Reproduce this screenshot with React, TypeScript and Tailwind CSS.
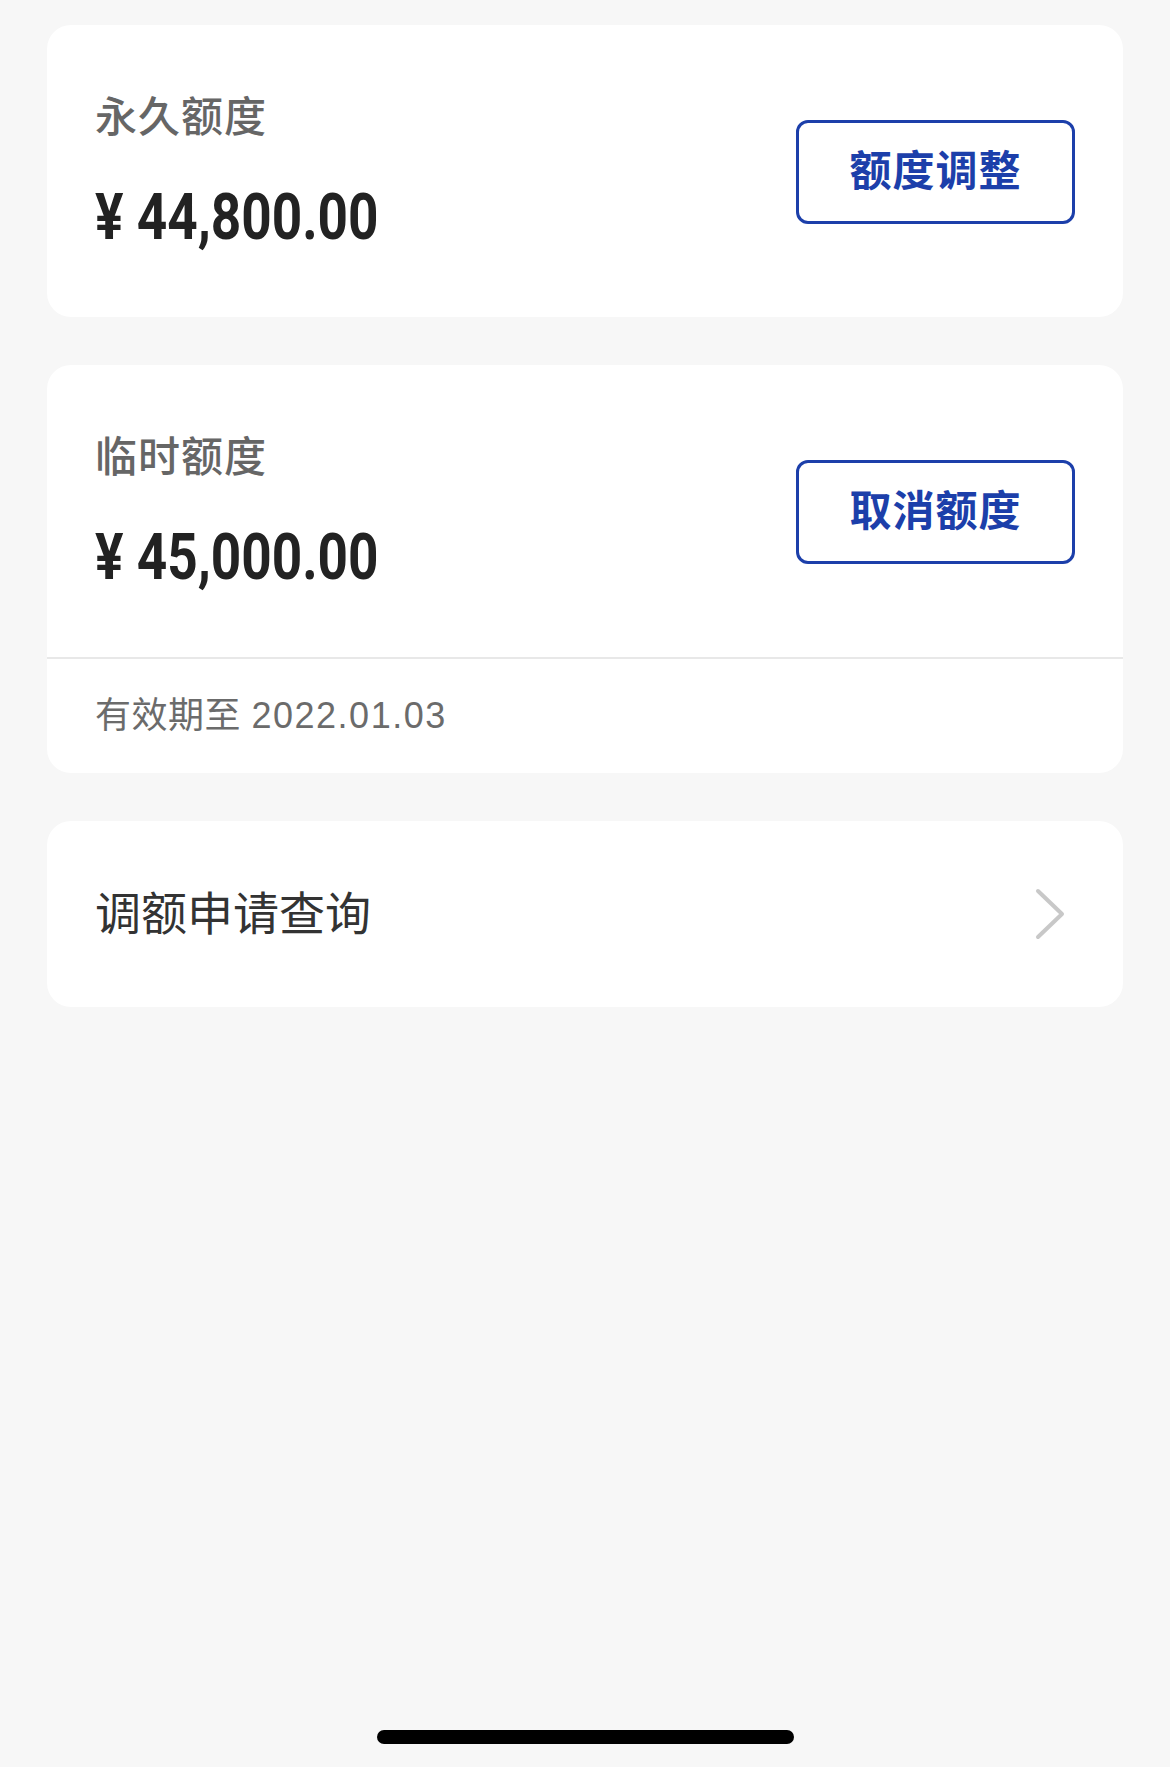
import React from "react";

const cjk = { fontFamily: '"Liberation Sans", "Noto Sans CJK SC", sans-serif' };
const num = { fontFamily: 'Roboto, "Noto Sans CJK SC", sans-serif' };

function QuotaTop({ label, amount, action }: { label: string; amount: string; action: string }) {
  return (
    <div className="flex items-center justify-between pl-[48px] pr-[48px] pt-[68px] pb-[67px]">
      <div className="flex flex-col">
        <div className="text-[42px] leading-[50px] font-medium text-[#666666] tracking-[1px]" style={cjk}>
          {label}
        </div>
        <div
          className="mt-[43px] text-[64px] leading-[64px] font-bold text-[#222222] whitespace-pre origin-left scale-x-[0.83]"
          style={num}
        >
          {"¥ " + amount}
        </div>
      </div>
      <button
        className="w-[279px] h-[104px] rounded-[12px] border-[3px] border-[#1c3faa] bg-white flex items-center justify-center text-[42px] font-bold text-[#1c3faa] tracking-[1px]"
        style={cjk}
      >
        {action}
      </button>
    </div>
  );
}

export default function App() {
  return (
    <div className="w-[1170px] h-[1767px] bg-[#f7f7f7] flex flex-col">
      <div className="px-[47px] pt-[25px] flex flex-col gap-[48px]">
        <div className="bg-white rounded-[24px]">
          <QuotaTop label="永久额度" amount="44,800.00" action="额度调整" />
        </div>
        <div className="bg-white rounded-[24px]">
          <QuotaTop label="临时额度" amount="45,000.00" action="取消额度" />
          <div className="h-[2px] bg-[#e8e8e8]" />
          <div className="h-[114px] flex items-center pl-[48px] text-[36px] text-[#6b6b6b] whitespace-pre" style={cjk}>
            <span className="tracking-[0.5px]">有效期至 </span>
            <span className="tracking-[1.5px]">2022.01.03</span>
          </div>
        </div>
        <div className="bg-white rounded-[24px] h-[186px] flex items-center justify-between pl-[48px] pr-[58px]">
          <span className="text-[46px] text-[#333333]" style={cjk}>
            调额申请查询
          </span>
          <svg width="30" height="52" viewBox="0 0 30 52" fill="none">
            <polyline points="3,3 27,26 3,49" stroke="#c8c8c8" strokeWidth="4" strokeLinecap="round" strokeLinejoin="round" />
          </svg>
        </div>
      </div>
      <div className="mt-auto mb-[23px] mx-auto w-[417px] h-[14px] rounded-full bg-black" />
    </div>
  );
}
